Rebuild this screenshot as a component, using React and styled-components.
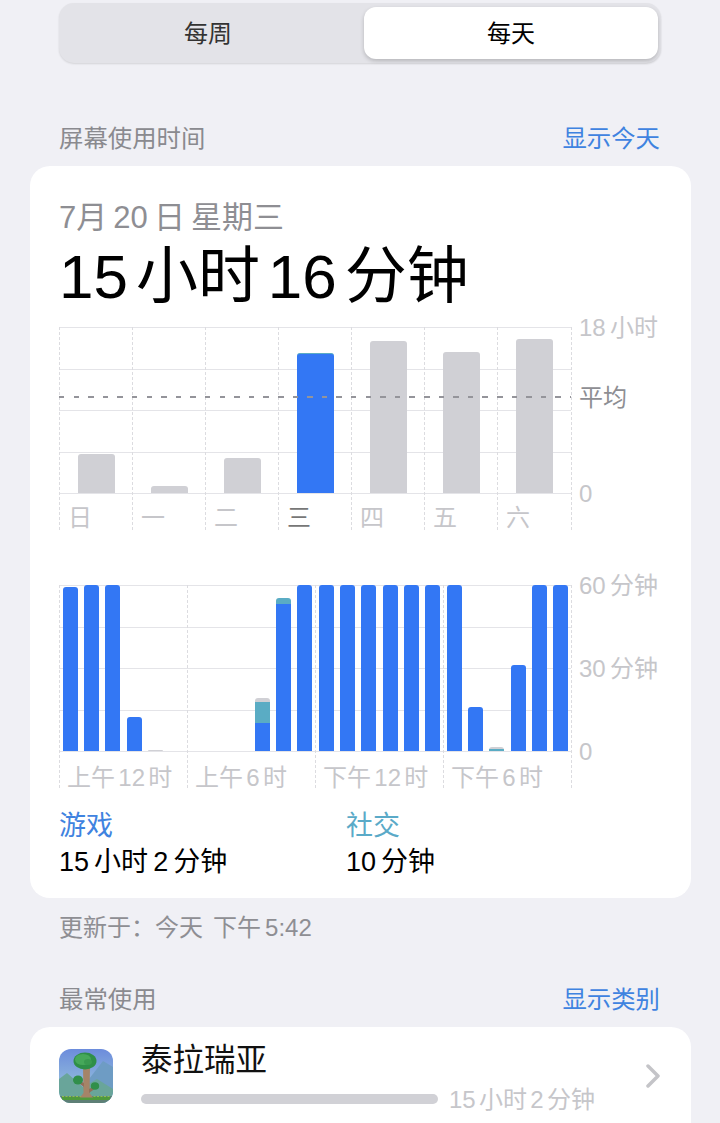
import styled, { createGlobalStyle } from 'styled-components';

const BLUE = '#3377f4';
const TEAL = '#5aacc4';
const GRAY = '#d0d0d5';

const weekBars = [
	{ day: '日', height: 39 },
	{ day: '一', height: 7 },
	{ day: '二', height: 35 },
	{ day: '三', height: 140, active: true },
	{ day: '四', height: 152 },
	{ day: '五', height: 141 },
	{ day: '六', height: 154 },
];

const full = [[BLUE, 166]];
const hourSections = [
	{
		label: '上午 12 时',
		bars: [[[BLUE, 164]], full, full, [[BLUE, 34]], [[GRAY, 1]], []],
	},
	{
		label: '上午 6 时',
		bars: [[], [], [], [[GRAY, 4], [TEAL, 21], [BLUE, 28]], [[TEAL, 6], [BLUE, 147]], full],
	},
	{
		label: '下午 12 时',
		bars: [full, full, full, full, full, full],
	},
	{
		label: '下午 6 时',
		bars: [full, [[BLUE, 44]], [[GRAY, 2], [TEAL, 2]], [[BLUE, 86]], full, full],
	},
];

export default function App() {
	return (
		<Page>
			<GlobalStyle />
			<Segment>
				<SegmentItem>每周</SegmentItem>
				<SegmentItem $selected>每天</SegmentItem>
			</Segment>

			<SectionHeader>
				<SectionTitle>屏幕使用时间</SectionTitle>
				<SectionLink>显示今天</SectionLink>
			</SectionHeader>

			<Card>
				<DateText>7月 20 日 星期三</DateText>
				<Total>15 小时 16 分钟</Total>

				<ChartRow>
					<WeekChart>
						{weekBars.map((item) => (
							<DayColumn key={item.day}>
								<DayBarArea>
									<DayBar $height={item.height} $active={item.active} />
								</DayBarArea>
								<DayLabel $active={item.active}>{item.day}</DayLabel>
							</DayColumn>
						))}
						<AverageLine />
					</WeekChart>
					<Axis $rows="70px 96px 0">
						<AxisLabel>18 小时</AxisLabel>
						<AxisLabel $dark>平均</AxisLabel>
						<AxisLabel>0</AxisLabel>
					</Axis>
				</ChartRow>

				<HourRow>
					<HourChart>
						{hourSections.map((section) => (
							<HourSection key={section.label}>
								<HourBarArea>
									{section.bars.map((parts, i) => (
										<HourSlot key={i}>
											<HourBar>
												{parts.map(([color, height], j) => (
													<BarPart key={j} $color={color} $height={height} />
												))}
											</HourBar>
										</HourSlot>
									))}
								</HourBarArea>
								<HourLabel>{section.label}</HourLabel>
							</HourSection>
						))}
					</HourChart>
					<Axis $rows="83px 83px 0">
						<AxisLabel>60 分钟</AxisLabel>
						<AxisLabel>30 分钟</AxisLabel>
						<AxisLabel>0</AxisLabel>
					</Axis>
				</HourRow>

				<Legend>
					<LegendItem>
						<LegendName $color="#3f83e0">游戏</LegendName>
						<LegendValue>15 小时 2 分钟</LegendValue>
					</LegendItem>
					<LegendItem>
						<LegendName $color="#5aaac8">社交</LegendName>
						<LegendValue>10 分钟</LegendValue>
					</LegendItem>
				</Legend>
			</Card>

			<Updated>更新于：今天 下午{'\u2006'}5:42</Updated>

			<SectionHeader $second>
				<SectionTitle>最常使用</SectionTitle>
				<SectionLink>显示类别</SectionLink>
			</SectionHeader>

			<AppCard>
				<AppIcon />
				<AppInfo>
					<AppName>泰拉瑞亚</AppName>
					<UsageRow>
						<UsageBar />
						<UsageText>15 小时 2 分钟</UsageText>
					</UsageRow>
				</AppInfo>
				<Chevron />
			</AppCard>
		</Page>
	);
}

function AppIcon() {
	return (
		<IconSvg viewBox="0 0 54 54">
			<defs>
				<linearGradient id="sky" x1="0" y1="0" x2="0" y2="1">
					<stop offset="0" stopColor="#6c8cdc" />
					<stop offset="0.55" stopColor="#8ab2dc" />
				</linearGradient>
			</defs>
			<rect width="54" height="54" fill="url(#sky)" />
			<path d="M30 30 L44 12 L54 18 V54 H20Z" fill="#6e9cc4" />
			<path d="M0 30 L8 24 L24 38 L38 30 L54 40 V54 H0Z" fill="#69a59a" />
			<rect x="0" y="47" width="54" height="7" fill="#5e7f76" />
			<path d="M3 48 H51 V51 H3Z" fill="#4f9a3c" />
			<path d="M3 47.5 H51" stroke="#8cc24e" strokeWidth="1" strokeDasharray="2 1.5" />
			<path d="M24 18 H31 L30.5 44 L34 48.5 H21 L24.5 44Z" fill="#a58468" />
			<path d="M25 34 L18 30 V33 L25 38Z M30 40 L37 36 V39 L30 44Z" fill="#93705a" />
			<ellipse cx="26" cy="12" rx="11.5" ry="8.5" fill="#2f8f48" />
			<ellipse cx="24" cy="10.5" rx="8" ry="5.5" fill="#46a85a" />
			<ellipse cx="29" cy="13" rx="4" ry="3" fill="#3a9a50" />
			<ellipse cx="19" cy="31" rx="5" ry="4.5" fill="#318f4a" />
			<ellipse cx="36" cy="37" rx="4.2" ry="3.8" fill="#318f4a" />
		</IconSvg>
	);
}

function Chevron() {
	return (
		<ChevronSvg viewBox="0 0 16 26">
			<path d="M4 3 L14 13 L4 23" />
		</ChevronSvg>
	);
}

const GlobalStyle = createGlobalStyle`
	html, body {
		margin: 0;
		height: 1123px;
		overflow: hidden;
		background: #f0f0f5;
	}
	* {
		box-sizing: border-box;
	}
`;

const Page = styled.div`
	width: 720px;
	height: 1123px;
	overflow: hidden;
	padding: 3px 29px 0 30px;
	font-family: 'Liberation Sans', 'Noto Sans CJK SC', sans-serif;
	color: #000;
`;

const Segment = styled.div`
	width: 602px;
	height: 60px;
	margin-left: 29px;
	padding: 4px 3px;
	border-radius: 15px;
	background: #e3e3e8;
	box-shadow: 0 1px 2px rgba(0, 0, 0, 0.12);
	display: grid;
	grid-template-columns: 292px 294px;
	column-gap: 10px;
`;

const SegmentItem = styled.div`
	display: flex;
	align-items: center;
	justify-content: center;
	padding-bottom: 4px;
	font-size: 24px;
	color: ${({ $selected }) => ($selected ? '#000' : '#333')};
	background: ${({ $selected }) => ($selected ? '#fff' : 'transparent')};
	border-radius: 12px;
	box-shadow: ${({ $selected }) => ($selected ? '0 2px 4px rgba(0, 0, 0, 0.2)' : 'none')};
`;

const SectionHeader = styled.div`
	margin: ${({ $second }) => ($second ? '41px' : '60px')} 0 13px;
	padding: 0 31px 4px 29px;
	height: 30px;
	display: flex;
	justify-content: space-between;
	align-items: center;
	font-size: 24.4px;
`;

const SectionTitle = styled.div`
	color: #8a8a8f;
`;

const SectionLink = styled.div`
	color: #3f83e0;
`;

const Card = styled.div`
	width: 661px;
	height: 732px;
	padding: 34px 0 0 29px;
	background: #fff;
	border-radius: 20px;
`;

const DateText = styled.div`
	font-size: 31px;
	line-height: 36px;
	color: #8e8e93;
	word-spacing: -0.08em;
`;

const Total = styled.div`
	margin-top: 6px;
	font-size: 62px;
	line-height: 70px;
	word-spacing: -0.15em;
`;

const ChartRow = styled.div`
	margin-top: 15px;
	display: flex;
`;

const HourRow = styled(ChartRow)`
	margin-top: 55px;
`;

const WeekChart = styled.div`
	position: relative;
	width: 513px;
	height: 203px;
	display: grid;
	grid-template-columns: repeat(7, 73px);
	border-right: 1px dashed #dcdce0;
	background-image: repeating-linear-gradient(#e4e4e8 0 1px, transparent 1px 41.5px);
	background-size: 100% 167px;
	background-repeat: no-repeat;
`;

const DayColumn = styled.div`
	border-left: 1px dashed #dcdce0;
`;

const DayBarArea = styled.div`
	height: 166px;
	display: flex;
	align-items: flex-end;
	padding-left: 18px;
`;

const DayBar = styled.div`
	width: 37px;
	height: ${({ $height }) => $height}px;
	background: ${({ $active }) => ($active ? BLUE : GRAY)};
	border-top: ${({ $active }) => ($active ? `1px solid ${TEAL}` : 'none')};
	border-radius: 3px 3px 0 0;
`;

const DayLabel = styled.div`
	padding-left: 8px;
	font-size: 24px;
	line-height: 50px;
	height: 37px;
	color: ${({ $active }) => ($active ? '#777' : '#c6c6ca')};
`;

// lies over the bars
const AverageLine = styled.div`
	position: absolute;
	left: 0;
	right: 0;
	top: 69px;
	height: 2px;
	background: repeating-linear-gradient(90deg, #94949a 0 5.5px, transparent 5.5px 14.6px);
`;

const Axis = styled.div`
	margin-left: 7px;
	height: 166px;
	display: grid;
	grid-template-rows: ${({ $rows }) => $rows};
`;

const AxisLabel = styled.div`
	height: 0;
	line-height: 2px;
	font-size: 24px;
	white-space: nowrap;
	word-spacing: -0.1em;
	color: ${({ $dark }) => ($dark ? '#8e8e93' : '#c6c6ca')};
`;

const HourChart = styled.div`
	width: 513px;
	height: 203px;
	display: grid;
	grid-template-columns: repeat(4, 128px);
	border-right: 1px dashed #dcdce0;
	background-image: repeating-linear-gradient(#e4e4e8 0 1px, transparent 1px 41.5px);
	background-size: 100% 167px;
	background-repeat: no-repeat;
`;

const HourSection = styled.div`
	border-left: 1px dashed #dcdce0;
`;

const HourBarArea = styled.div`
	height: 166px;
	display: grid;
	grid-template-columns: repeat(6, 1fr);
`;

const HourSlot = styled.div`
	display: flex;
	align-items: flex-end;
	justify-content: center;
`;

const HourBar = styled.div`
	width: 15px;
	display: flex;
	flex-direction: column;
	border-radius: 3px 3px 0 0;
	overflow: hidden;
`;

const BarPart = styled.div`
	height: ${({ $height }) => $height}px;
	background: ${({ $color }) => $color};
`;

const HourLabel = styled.div`
	padding-left: 7px;
	font-size: 24px;
	line-height: 54px;
	height: 37px;
	white-space: nowrap;
	word-spacing: -0.14em;
	color: #c6c6ca;
`;

const Legend = styled.div`
	margin-top: 20px;
	display: grid;
	grid-template-columns: 287px auto;
`;

const LegendItem = styled.div``;

const LegendName = styled.div`
	font-size: 27px;
	line-height: 36px;
	color: ${({ $color }) => $color};
`;

const LegendValue = styled.div`
	font-size: 27px;
	line-height: 36px;
	word-spacing: -0.09em;
`;

const Updated = styled.div`
	margin-top: 15px;
	padding-left: 29px;
	font-size: 24px;
	line-height: 30px;
	color: #8e8e93;
	word-spacing: 0.14em;
`;

const AppCard = styled.div`
	width: 661px;
	height: 140px;
	padding: 12px 31px 0 29px;
	background: #fff;
	border-radius: 20px;
	display: flex;
	align-items: flex-start;
`;

const IconSvg = styled.svg`
	flex: none;
	width: 54px;
	height: 54px;
	margin: 10px 28px 0 0;
	border-radius: 12px;
`;

const AppInfo = styled.div`
	flex: 1;
`;

const AppName = styled.div`
	font-size: 31.5px;
	line-height: 42px;
	color: #111;
`;

const UsageRow = styled.div`
	margin-top: 3px;
	height: 30px;
	display: flex;
	align-items: center;
	gap: 11px;
`;

const UsageBar = styled.div`
	width: 297px;
	height: 10px;
	border-radius: 5px;
	background: #d1d1d6;
`;

const UsageText = styled.div`
	margin-top: -4px;
	font-size: 24px;
	color: #c6c6ca;
	word-spacing: -0.14em;
`;

const ChevronSvg = styled.svg`
	flex: none;
	width: 16px;
	height: 26px;
	margin-top: 24px;
	fill: none;
	stroke: #c4c4c8;
	stroke-width: 3.5;
	stroke-linecap: round;
	stroke-linejoin: round;
`;
